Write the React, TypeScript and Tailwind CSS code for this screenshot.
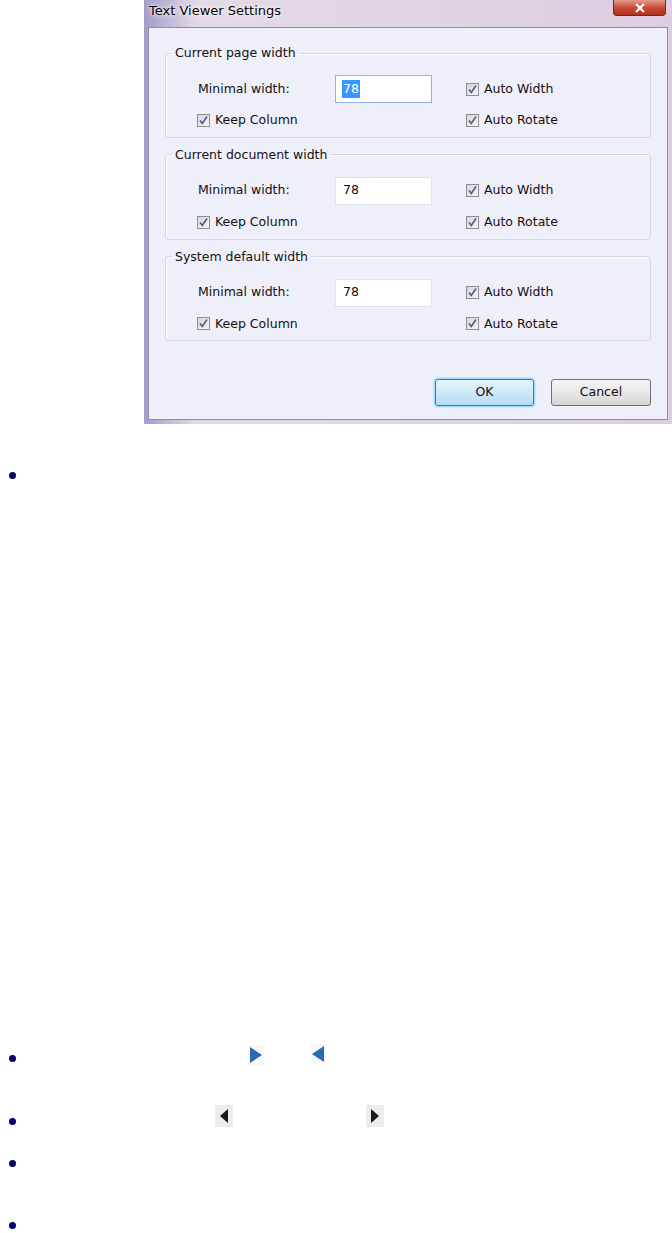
const groups = [
  { title: 'Current page width', focused: true },
  { title: 'Current document width', focused: false },
  { title: 'System default width', focused: false },
]

const CheckBox = ({ label }: { label: string }) => (
  <label className="flex items-center gap-[5px]">
    <span className="flex h-[13px] w-[13px] items-center justify-center border border-[#8f8f8f] bg-gradient-to-br from-[#d6d6d6] to-[#f6f6f6]">
      <svg width="11" height="11" viewBox="0 0 11 11">
        <path d="M2 5.5 L4.3 8.5 L9 1.5" fill="none" stroke="#4a5c96" strokeWidth="1.6" />
      </svg>
    </span>
    <span>{label}</span>
  </label>
)

const Group = ({ title, focused }: { title: string; focused: boolean }) => (
  <fieldset className="rounded-[3px] border border-[#d3d7e6] pb-[7px] shadow-[inset_1px_1px_0_#fafbff]">
    <legend className="ml-[6px] px-[3px] leading-[16px]">{title}</legend>
    <div className="grid grid-cols-[138px_131px_1fr] items-center gap-y-[8px] pl-[31px] pt-[14px]">
      <span className="pl-[1px]">Minimal width:</span>
      <div
        className={
          'flex h-[28px] w-[97px] items-center bg-white pl-[6px] ' +
          (focused ? 'border border-[#8db2e3]' : 'border border-[#dfe4ea]')
        }
      >
        {focused ? (
          <span className="bg-[#3399ff] px-[1px] text-white">78</span>
        ) : (
          <span className="px-[1px]">78</span>
        )}
      </div>
      <CheckBox label="Auto Width" />
      <CheckBox label="Keep Column" />
      <span />
      <CheckBox label="Auto Rotate" />
    </div>
  </fieldset>
)

const Dialog = () => (
  <div className="ml-[144px] flex h-[424px] w-[528px] flex-col bg-gradient-to-r from-[#a39cc8] via-[#e4dae6] via-10% to-[#dccde0] font-['DejaVu_Sans',sans-serif] text-[12.5px] text-[#111]">
    {/* title bar */}
    <div className="relative flex h-[27px] items-start">
      <span className="pl-[5px] pt-[1px] text-[13px] text-black [text-shadow:0_0_6px_#fff,0_0_3px_#fff]">
        Text Viewer Settings
      </span>
      <div className="absolute right-[6px] top-0 flex h-[16px] w-[53px] items-center justify-center rounded-b-[4px] border border-t-0 border-[#6e2a22] bg-gradient-to-b from-[#e39b8c] via-[#c94b36] to-[#b0301d]">
        <svg width="12" height="10" viewBox="0 0 12 10">
          <path d="M2 1 L10 9 M10 1 L2 9" stroke="#fff" strokeWidth="2.2" />
        </svg>
      </div>
    </div>
    {/* client area */}
    <div className="mx-[4px] mb-[4px] flex flex-1 flex-col border border-[#8d90a4] bg-[#eeeff9] px-[16px] pt-[17px]">
      <div className="flex flex-col gap-[9px]">
        {groups.map((g) => (
          <Group key={g.title} title={g.title} focused={g.focused} />
        ))}
      </div>
      <div className="mt-auto mb-[13px] flex justify-end gap-[17px]">
        <button className="h-[27px] w-[99px] rounded-[3px] border border-[#3c7fb1] bg-gradient-to-b from-[#e7f4fb] to-[#b4dcf2] shadow-[0_0_2px_1px_#7fd0f7]">
          OK
        </button>
        <button className="h-[27px] w-[100px] rounded-[3px] border border-[#707070] bg-gradient-to-b from-[#f4f4f4] via-[#e8e8e8] to-[#d4d4d4]">
          Cancel
        </button>
      </div>
    </div>
  </div>
)

const Bullet = () => <span className="ml-[9px] h-[7px] w-[7px] shrink-0 rounded-full bg-[#000066]" />

const BlueArrow = ({ dir }: { dir: 'left' | 'right' }) => (
  <span className="flex h-[20px] w-[16px] items-center justify-center bg-[#f6f8fa]">
    <svg width="14" height="18" viewBox="0 0 14 18">
      {dir === 'right' ? (
        <polygon points="1,1 13,9 1,17" fill="#2d6aad" />
      ) : (
        <polygon points="13,1 1,9 13,17" fill="#2d6aad" />
      )}
    </svg>
  </span>
)

const BlackArrow = ({ dir }: { dir: 'left' | 'right' }) => (
  <span className="flex h-[22px] w-[18px] items-center justify-center bg-[#ececec]">
    <svg width="10" height="16" viewBox="0 0 10 16">
      {dir === 'right' ? (
        <polygon points="1,1 9,8 1,15" fill="#1a1a1a" />
      ) : (
        <polygon points="9,1 1,8 9,15" fill="#1a1a1a" />
      )}
    </svg>
  </span>
)

export default function App() {
  return (
    <div className="h-[1233px] w-full bg-white">
      <Dialog />
      <ul className="flex flex-col">
        <li className="mt-[41px] flex h-[20px] items-center">
          <Bullet />
        </li>
        <li className="mt-[563px] flex h-[20px] items-center">
          <Bullet />
          <span className="ml-[232px] -mt-[6px]">
            <BlueArrow dir="right" />
          </span>
          <span className="ml-[46px] -mt-[8px]">
            <BlueArrow dir="left" />
          </span>
        </li>
        <li className="mt-[43px] flex h-[20px] items-center">
          <Bullet />
          <span className="ml-[199px] -mt-[10px]">
            <BlackArrow dir="left" />
          </span>
          <span className="ml-[133px] -mt-[10px]">
            <BlackArrow dir="right" />
          </span>
        </li>
        <li className="mt-[22px] flex h-[20px] items-center">
          <Bullet />
        </li>
        <li className="mt-[42px] flex h-[20px] items-center">
          <Bullet />
        </li>
      </ul>
    </div>
  )
}
